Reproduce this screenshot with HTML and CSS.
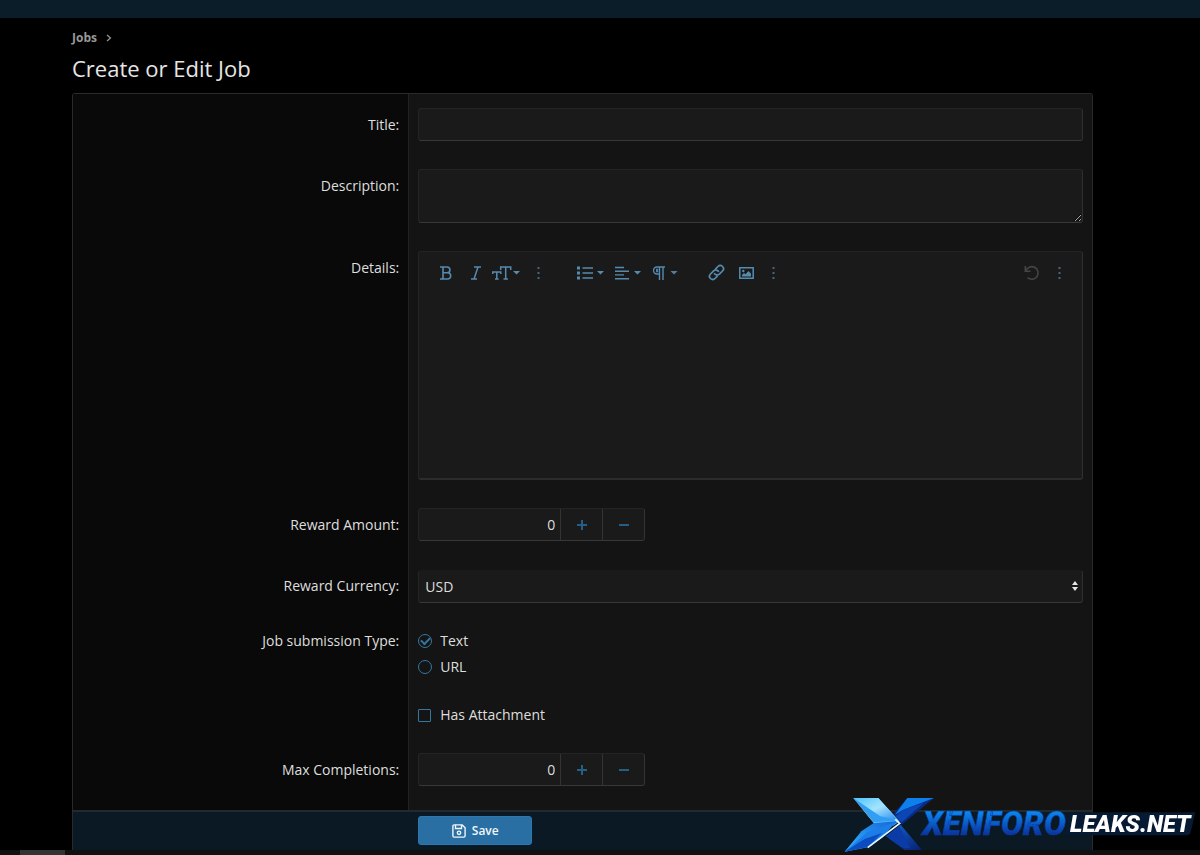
FILE: index.html
```html
<!DOCTYPE html>
<html lang="en">
<head>
<meta charset="utf-8">
<meta name="viewport" content="width=device-width, initial-scale=1">
<title>Create or Edit Job</title>
<link rel="stylesheet" href="styles.css">
</head>
<body>
<div class="page">
  <header class="topbar"></header>
  <main class="content">
    <nav class="crumbs" aria-label="Breadcrumb">
      <a href="#">Jobs</a>
      <svg width="6" height="8" viewBox="0 0 6 8"><path d="M1 1l3.5 3L1 7" fill="none" stroke="currentColor" stroke-width="1.2"/></svg>
    </nav>
    <h1 class="title">Create or Edit Job</h1>

    <form class="panel">
      <div class="rows">
        <div class="row">
          <div class="term"><label for="title">Title:</label></div>
          <div class="field"><input class="control" type="text" id="title"></div>
        </div>
        <div class="row">
          <div class="term"><label for="description">Description:</label></div>
          <div class="field"><textarea class="control control-area" id="description"></textarea></div>
        </div>
        <div class="row">
          <div class="term"><label for="details">Details:</label></div>
          <div class="field">
            <div class="editor">
              <div class="toolbar">
                <div class="group">
                  <button type="button" class="tool" aria-label="Bold"><svg width="12" height="14" viewBox="0 0 12 14"><path d="M0 1h7a2.9 2.9 0 0 1 0 5.8H3M0 13h7.600a3.100 3.100 0 0 0 0-6.200M3 1v12" fill="none" stroke="currentColor" stroke-width="1.600"/></svg></button>
                  <button type="button" class="tool" aria-label="Italic"><svg width="12" height="14" viewBox="0 0 12 14"><path d="M4 1h7M1 13h6M8 1L4 13" fill="none" stroke="currentColor" stroke-width="1.500"/></svg></button>
                  <button type="button" class="tool" aria-label="Text size"><svg width="28" height="14" viewBox="0 0 28 14"><path d="M8.700 4V1h10v3M13.700 1v12M11.500 13h4.400M.8 8V6h8v2M4.800 6v7M3 13h3.600" fill="none" stroke="currentColor" stroke-width="1.500"/><path d="M21 5h7l-3.500 3.600z" fill="currentColor"/></svg></button>
                  <button type="button" class="tool tool-more" aria-label="More text options"><svg width="3" height="12" viewBox="0 0 3 12"><path d="M.5 0h2v2h-2zM.5 5h2v2h-2zM.5 10h2v2h-2z" fill="currentColor"/></svg></button>
                </div>
                <div class="group">
                  <button type="button" class="tool tool-wide" aria-label="List"><svg width="27" height="14" viewBox="0 0 27 14"><path d="M0 .5h3v3H0zM0 5.500h3v3H0zM0 10.500h3v3H0zM5.500 1.300H16v1.500H5.500zM5.500 6.300H16v1.500H5.500zM5.500 11.300H16v1.500H5.500zM20 5h7l-3.500 3.600z" fill="currentColor"/></svg></button>
                  <button type="button" class="tool tool-wide" aria-label="Alignment"><svg width="27" height="14" viewBox="0 0 27 14"><path d="M0 .8h9v1.400H0zM0 4.500h14v1.400H0zM0 8.200h9v1.400H0zM0 12h14v1.400H0zM19 5h7l-3.500 3.600z" fill="currentColor"/></svg></button>
                  <button type="button" class="tool tool-wide" aria-label="Paragraph format"><svg width="26" height="14" viewBox="0 0 26 14"><path d="M12 1H4a3.500 3.500 0 0 0 0 7h2.500M6.500 1v13M10 1v13" fill="none" stroke="currentColor" stroke-width="1.400"/><path d="M3 2.800h2.200v3.400H3zM17.500 5h7L21 8.600z" fill="currentColor" fill-opacity=".9"/></svg></button>
                </div>
                <div class="group">
                  <button type="button" class="tool" aria-label="Insert link"><svg width="17" height="17" viewBox="0 0 16 16"><g transform="rotate(-45 8 8)" fill="none" stroke="currentColor" stroke-width="1.600"><path d="M6.500 11H3a3 3 0 0 1 0-6h4.200a3 3 0 0 1 2.700 4.100"/><path d="M9.500 5H13a3 3 0 0 1 0 6H8.800a3 3 0 0 1-2.700-4.100"/></g></svg></button>
                  <button type="button" class="tool" aria-label="Insert image"><svg width="15" height="12" viewBox="0 0 15 12"><path d="M.8.8h13.400v10.400H.8z" fill="none" stroke="currentColor" stroke-width="1.500"/><path d="M3 9.500V8l2-2 1.500 1.300L9.500 4 12 6.800v2.700z" fill="currentColor"/><circle cx="4.300" cy="4" r="1.200" fill="currentColor"/></svg></button>
                  <button type="button" class="tool tool-slim" aria-label="More rich options"><svg width="3" height="12" viewBox="0 0 3 12"><path d="M.5 0h2v2h-2zM.5 5h2v2h-2zM.5 10h2v2h-2z" fill="currentColor"/></svg></button>
                </div>
                <div class="group group-end">
                  <button type="button" class="tool tool-off" aria-label="Undo"><svg width="16" height="16" viewBox="0 0 16 16"><path d="M1.300 1v5.200h5.200M1.800 6A6.300 6.300 0 1 1 3.600 12.700" fill="none" stroke="currentColor" stroke-width="1.600"/></svg></button>
                  <button type="button" class="tool tool-slim" aria-label="More options"><svg width="3" height="12" viewBox="0 0 3 12"><path d="M.5 0h2v2h-2zM.5 5h2v2h-2zM.5 10h2v2h-2z" fill="currentColor"/></svg></button>
                </div>
              </div>
              <textarea class="editor-text" id="details"></textarea>
            </div>
          </div>
        </div>
        <div class="row">
          <div class="term"><label for="amount">Reward Amount:</label></div>
          <div class="field">
            <div class="stepper">
              <input type="number" id="amount" value="0">
              <button type="button" aria-label="Increase"><svg width="12" height="12" viewBox="0 0 12 12"><path d="M6 1v10M1 6h10" stroke="currentColor" stroke-width="2"/></svg></button>
              <button type="button" aria-label="Decrease"><svg width="12" height="12" viewBox="0 0 12 12"><path d="M1 6h10" stroke="currentColor" stroke-width="2"/></svg></button>
            </div>
          </div>
        </div>
        <div class="row">
          <div class="term"><label for="currency">Reward Currency:</label></div>
          <div class="field">
            <div class="picker">
              <select class="control" id="currency"><option>USD</option></select>
              <svg class="picker-mark" width="6" height="10" viewBox="0 0 6 10"><path d="M3 0l3 4H0zM3 10L0 6h6z" fill="currentColor"/></svg>
            </div>
          </div>
        </div>
        <div class="row" role="radiogroup" aria-labelledby="type-label">
          <div class="term term-choice" id="type-label">Job submission Type:</div>
          <div class="field choices">
            <label class="choice"><input type="radio" name="type" checked>Text</label>
            <label class="choice"><input type="radio" name="type">URL</label>
          </div>
        </div>
        <div class="row">
          <div class="term"></div>
          <div class="field choices">
            <label class="choice"><input type="checkbox">Has Attachment</label>
          </div>
        </div>
        <div class="row">
          <div class="term"><label for="max">Max Completions:</label></div>
          <div class="field">
            <div class="stepper">
              <input type="number" id="max" value="0">
              <button type="button" aria-label="Increase"><svg width="12" height="12" viewBox="0 0 12 12"><path d="M6 1v10M1 6h10" stroke="currentColor" stroke-width="2"/></svg></button>
              <button type="button" aria-label="Decrease"><svg width="12" height="12" viewBox="0 0 12 12"><path d="M1 6h10" stroke="currentColor" stroke-width="2"/></svg></button>
            </div>
          </div>
        </div>
      </div>
      <div class="submit">
        <button type="submit" class="save">
          <svg width="14" height="14" viewBox="0 0 14 14" fill="none" stroke="currentColor" stroke-width="1.400"><path d="M.9 2.200A1.300 1.300 0 0 1 2.200.9h8l2.900 2.900v8a1.300 1.300 0 0 1-1.300 1.300H2.200A1.300 1.300 0 0 1 .9 11.800zM3.500 1v3.500h6V1"/><circle cx="7" cy="8.800" r="1.700"/></svg>
          Save
        </button>
      </div>
    </form>
  </main>
  <div class="scroll"><div class="thumb"></div></div>
</div>

<svg class="brand" width="357" height="60" viewBox="39 45 1071 180" role="img" aria-label="XenforoLeaks.net">
  <defs>
    <linearGradient id="word" x1="0" y1="0" x2="0" y2="1"><stop offset=".2" stop-color="#0b86ea"/><stop offset=".8" stop-color="#0a2f9c"/></linearGradient>
    <linearGradient id="ice" x1="0" y1="0" x2="1" y2="1"><stop offset="0" stop-color="#4cc4fb"/><stop offset=".5" stop-color="#a5e4ff"/><stop offset="1" stop-color="#2a8ff0"/></linearGradient>
    <linearGradient id="leg" x1="1" y1="0" x2="0" y2="1"><stop offset="0" stop-color="#1267d8"/><stop offset="1" stop-color="#35b4ff"/></linearGradient>
    <linearGradient id="deep" x1="0" y1="0" x2="1" y2="1"><stop offset="0" stop-color="#1266da"/><stop offset="1" stop-color="#08206f"/></linearGradient>
  </defs>
  <path d="M718 97h378l-14 60q-2 9-12 9H706z" fill="#071a33"/>
  <path d="M232 54h80L215 134l-24-34z" fill="#0a2a86"/>
  <path d="M232 54h80l-92 35-25 15z" fill="#0d80ec"/>
  <path d="M220 89l62-21-67 59-18-18z" fill="#0b46b4"/>
  <path d="M212 134l64 76h-52l-56-41z" fill="url(#deep)"/>
  <path d="M168 169l40-30 32 65h-18z" fill="#0b3ba6"/>
  <path d="M70 54h75l64 70-20 14-58-9z" fill="url(#ice)"/>
  <path d="M70 54l61 73 68-5z" fill="#319df3"/>
  <path d="M70 54h75l56 65-50-10z" fill="url(#ice)"/>
  <path d="M131 129l72-5-90 78-69 13 50-61z" fill="url(#leg)"/>
  <path d="M44 215l69-60 85-30-42 49-43 26z" fill="#1b7de8"/>
  <path d="M44 215l60-38 52-18-43 42z" fill="#0c4bc0"/>
  <path d="M113 203l96-73-13-12" fill="none" stroke="#e8f8ff" stroke-width="5"/>
  <text class="word word-lead" x="277" y="166" font-size="99" fill="url(#word)">XENFORO</text>
  <text class="word" x="720" y="157" font-size="71" fill="#fff">LEAKS.NET</text>
</svg>
</body>
</html>
```

FILE: styles.css
```css
* { box-sizing: border-box; }

:root { color-scheme: dark; }

body {
  margin: 0;
  background: #000;
  color: #dedede;
  font: 14px/20px "Open Sans", "Noto Sans", sans-serif;
}

button, input, select, textarea { font: inherit; color: inherit; margin: 0; }
svg { display: block; flex: none; }

.page {
  min-height: 100vh;
  display: flex;
  flex-direction: column;
}
.topbar { height: 18px; background: #0b1d29; }
.content { flex: 1; padding: 10px 107px 0 72px; }

.crumbs {
  display: flex;
  align-items: center;
  gap: 9px;
  color: #999;
  font-size: 12px;
  font-weight: 700;
}
.crumbs a { color: inherit; text-decoration: none; }
.title {
  margin: 5px 0 10px;
  font-size: 22px;
  line-height: 30px;
  font-weight: 400;
  color: #e6e6e6;
}

.panel {
  border: 1px solid #2a2a2a;
  border-bottom: 0;
  border-radius: 3px 3px 0 0;
  background: #141414;
}
.rows {
  padding-bottom: 10px;
  background: linear-gradient(90deg, #090909 33%, #141414 33%);
}
.row { display: grid; grid-template-columns: 33% minmax(0, 1fr); }
.term { padding: 21px 9px 0; text-align: right; border-right: 1px solid #222; }
.term-choice { padding-top: 14px; }
.field { padding: 14px 9px; }
.row:last-child .term { margin-bottom: -10px; }

.control {
  display: block;
  width: 100%;
  height: 33px;
  padding: 5px 6px;
  background: #1a1a1a;
  border: 1px solid #242424;
  border-right-color: #303030;
  border-bottom-color: #383838;
  border-radius: 3px;
  outline: 0;
}
.control-area { height: 54px; resize: vertical; }

.editor {
  display: flex;
  flex-direction: column;
  height: 229px;
  background: #1a1a1a;
  border: 1px solid #242424;
  border-right-color: #303030;
  border-bottom: 2px solid #2c2c2c;
  border-radius: 3px;
}
.toolbar { display: flex; gap: 16px; height: 41px; padding: 0 11px 0 12px; }
.group { display: flex; }
.group-end { margin-left: auto; }
.tool {
  display: flex;
  align-items: center;
  justify-content: center;
  width: 30px;
  padding: 0;
  border: 0;
  background: none;
  color: #568bb0;
}
.tool-wide { width: 38px; }
.tool-more { width: 34px; color: #47677d; }
.tool-slim { width: 24px; color: #47677d; }
.tool-off { color: #454545; }
.editor-text {
  flex: 1;
  padding: 6px 12px;
  border: 0;
  outline: 0;
  background: none;
  resize: none;
}

.stepper {
  display: flex;
  width: 227px;
  height: 33px;
  background: #1a1a1a;
  border: 1px solid #242424;
  border-right-color: #333;
  border-bottom-color: #383838;
  border-radius: 3px;
}
.stepper input {
  flex: 1;
  min-width: 0;
  padding: 0 5px;
  border: 0;
  outline: 0;
  background: none;
  text-align: right;
  appearance: textfield;
}
.stepper input::-webkit-inner-spin-button { appearance: none; margin: 0; }
.stepper button {
  display: flex;
  align-items: center;
  justify-content: center;
  width: 42px;
  padding: 0;
  border: 0;
  border-left: 1px solid #333;
  background: none;
  color: #235f87;
}

.picker { position: relative; padding: 1px 0 0; }
.picker .control { appearance: none; border-top-color: #1a1a1a; }
.picker-mark { position: absolute; right: 5px; top: 12px; color: #e6e6e6; }

.choices { display: flex; flex-direction: column; align-items: flex-start; gap: 6px; }
.choice { display: flex; align-items: center; gap: 8px; }
.choice input {
  appearance: none;
  display: grid;
  place-items: center;
  width: 14px;
  height: 14px;
  border: 1px solid #34779f;
  border-radius: 50%;
}
.choice input[type="checkbox"] { width: 13px; height: 13px; margin-right: 1px; border-radius: 1px; }
.choice input[type="radio"]:checked::after {
  content: "";
  width: 7px;
  height: 4px;
  margin-bottom: 2px;
  border: solid #34779f;
  border-width: 0 0 2px 2px;
  transform: rotate(-45deg);
}

.submit {
  padding: 4px 9px 5px calc(33% + 9px);
  border-top: 2px solid #222a2e;
  background: #0a1923;
}
.save {
  display: flex;
  align-items: center;
  justify-content: center;
  gap: 6px;
  width: 114px;
  height: 29px;
  padding: 0;
  border: 1px solid #2f78ad;
  border-radius: 3px;
  background: #2a6fa3;
  color: #f0f6fa;
  font-size: 12px;
  font-weight: 600;
}

.scroll { height: 5px; padding-left: 20px; background: #111; }
.thumb { width: 45px; height: 5px; background: #333; }

.brand { position: fixed; right: 0; bottom: 0; }
.word { font-family: Roboto, "Open Sans", sans-serif; font-weight: 900; font-style: italic; }
.word-lead { stroke: #0a3fae; stroke-width: 2; }
```
